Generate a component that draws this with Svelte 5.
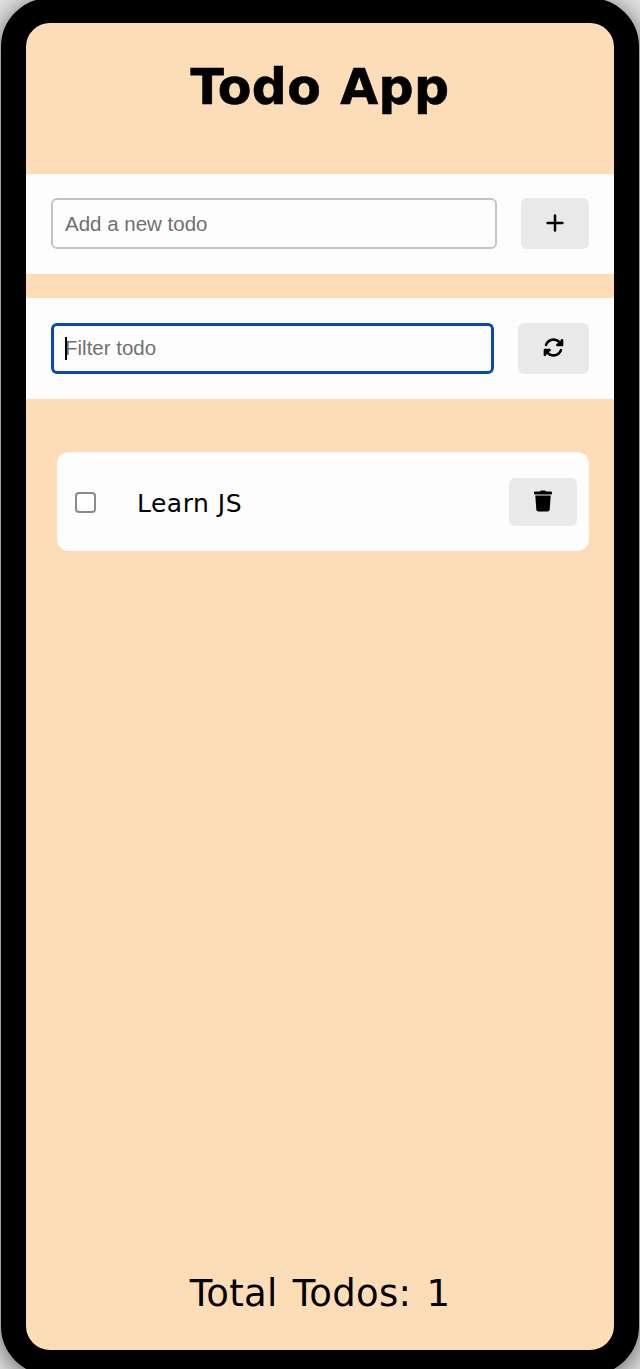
<script>
  let todos = $state([{ id: 1, text: 'Learn JS', done: false }]);
  let draft = $state('');
  let filter = $state('');
  let shown = $derived(todos.filter((t) => t.text.toLowerCase().includes(filter.toLowerCase())));

  function add() {
    if (!draft.trim()) return;
    todos.push({ id: Date.now(), text: draft.trim(), done: false });
    draft = '';
  }

  function remove(id) {
    todos = todos.filter((t) => t.id !== id);
  }
</script>

<div class="backdrop">
  <main class="device">
    <h1><span>Todo App</span></h1>

    <section class="bar">
      <div class="field">
        <input type="text" placeholder="Add a new todo" bind:value={draft} />
      </div>
      <button class="add" aria-label="Add" onclick={add}>
        <svg width="18" height="18" viewBox="0 0 18 18">
          <path d="M9 1.600v14.800M1.600 9h14.800" fill="none" stroke="#000" stroke-width="2.500" stroke-linecap="round" />
        </svg>
      </button>
    </section>

    <section class="bar second">
      <div class="field active">
        <input type="text" placeholder="Filter todo" bind:value={filter} />
        <span class="caret"></span>
      </div>
      <button class="reset" aria-label="Reset" onclick={() => (filter = '')}>
        <svg width="21" height="21" viewBox="0 0 512 512">
          <path d="M105.1 202.6c7.700-21.800 20.200-42.300 37.800-59.800c62.500-62.500 163.800-62.500 226.300 0L386.300 160H352c-17.700 0-32 14.300-32 32s14.300 32 32 32H463.500c17.700 0 32-14.300 32-32V80c0-17.700-14.300-32-32-32s-32 14.300-32 32v35.200L414.400 97.600c-87.500-87.500-229.300-87.500-316.800 0C73.200 122 55.600 150.700 44.800 181.400c-5.900 16.700 2.900 34.900 19.500 40.800s34.900-2.900 40.800-19.500zM39 289.300c-13.800 4-23 16.500-23 30.700V432c0 17.700 14.300 32 32 32s32-14.300 32-32v-35.100l17.600 17.500c87.500 87.400 229.300 87.400 316.700 0c24.400-24.400 42.100-53.100 52.900-83.700c5.900-16.700-2.900-34.900-19.500-40.800s-34.900 2.900-40.800 19.500c-7.700 21.800-20.200 42.300-37.800 59.800c-62.500 62.500-163.800 62.500-226.300 0L125.600 352H160c17.700 0 32-14.300 32-32s-14.300-32-32-32H39z" />
          <path d="M463 80v112H350zM48 432V320h113z" stroke="#000" stroke-width="30" stroke-linejoin="round" />
        </svg>
      </button>
    </section>

    <ul>
      {#each shown as todo (todo.id)}
        <li>
          <input type="checkbox" aria-label={todo.text} bind:checked={todo.done} />
          <span class="label">{todo.text}</span>
          <button class="delete" aria-label="Delete" onclick={() => remove(todo.id)}>
            <svg width="18" height="22" viewBox="0 0 18 22">
              <path d="M6 1.500Q6.300.5 7.300.5h3.400q1 0 1.300 1h4.700q1.300 0 1.300 1.200v.8q0 .9-1 .9H1q-1 0-1-.9v-.8q0-1.200 1.300-1.200z" />
              <path d="M1.300 5.600h15.400l-1 14q-.2 2-2.200 2h-9q-2 0-2.200-2z" />
            </svg>
          </button>
        </li>
      {/each}
    </ul>

    <footer><span>Total Todos: {todos.length}</span></footer>
  </main>
</div>

<style>
  .backdrop {
    height: 1369px;
    overflow: hidden;
    display: flow-root;
    background: #e2e2e2;
  }

  .device {
    box-sizing: border-box;
    width: 638px;
    height: 1377px;
    margin: -2px 0 0 1px;
    border: 25px solid #000;
    border-radius: 49px;
    background: #fddcb8;
    box-shadow: 0 4px 26px rgba(0, 0, 0, 0.6);
    display: flex;
    flex-direction: column;
    font-family: Verdana, 'DejaVu Sans', sans-serif;
    color: #000;
    overflow: hidden;
  }

  h1 {
    margin: 0;
    height: 151px;
    box-sizing: border-box;
    padding-top: 35px;
    text-align: center;
    font-size: 49px;
    letter-spacing: 0.4px;
    word-spacing: 1.5px;
    line-height: 60px;
    font-weight: bold;
    white-space: nowrap;
    -webkit-text-stroke: 0.6px #000;
  }

  .bar {
    box-sizing: border-box;
    height: 100px;
    flex: none;
    display: flex;
    align-items: center;
    gap: 24px;
    padding: 0 25px 1px;
    background: #fdfdfd;
  }

  .second {
    height: 101px;
    margin-top: 24px;
    padding-bottom: 0;
  }

  .field {
    position: relative;
    flex: 1;
    height: 51px;
    box-sizing: border-box;
    border: 2px solid #c4c4c4;
    border-radius: 6px;
    background: #fdfdfd;
    display: flex;
  }

  .active {
    border: 3px solid #0848b0;
  }

  .field input {
    flex: 1;
    min-width: 0;
    border: 0;
    outline: 0;
    margin: 0;
    padding: 0 12px;
    background: transparent;
    font: 20.5px 'Liberation Sans', Arial, sans-serif;
    color: #000;
  }

  .active input {
    padding: 0 11px 1px;
  }

  .field input::placeholder {
    color: #707070;
    opacity: 1;
  }

  .caret {
    position: absolute;
    left: 11px;
    top: 11px;
    width: 2px;
    height: 23px;
    background: #000;
  }

  button {
    box-sizing: border-box;
    flex: none;
    display: flex;
    align-items: center;
    justify-content: center;
    border: 0;
    padding: 0 0 1px;
    border-radius: 6px;
    background: #e9e9e9;
  }

  .add {
    width: 68px;
    height: 51px;
  }

  .reset {
    width: 71px;
    height: 51px;
    padding-bottom: 2px;
  }

  ul {
    list-style: none;
    flex: 1;
    margin: 0;
    padding: 53px 25px 0 31px;
  }

  li {
    box-sizing: border-box;
    height: 99px;
    display: flex;
    align-items: center;
    padding: 0 12px 0 18px;
    border-radius: 12px;
    background: #fdfdfd;
  }

  li input {
    appearance: none;
    box-sizing: border-box;
    width: 21px;
    height: 21px;
    margin: 1px 41px 0 0;
    border: 2px solid #8a8a8a;
    border-radius: 4px;
    background: #fff;
  }

  li input:checked {
    background: #0848b0;
  }

  .label {
    flex: 1;
    padding-top: 3px;
    font-size: 25px;
    letter-spacing: 0.5px;
  }

  .delete {
    width: 68px;
    height: 48px;
    padding-bottom: 1px;
  }

  footer {
    height: 112px;
    line-height: 112px;
    text-align: center;
    font-size: 37px;
    letter-spacing: 0.3px;
    word-spacing: 3px;
    white-space: nowrap;
  }
</style>
